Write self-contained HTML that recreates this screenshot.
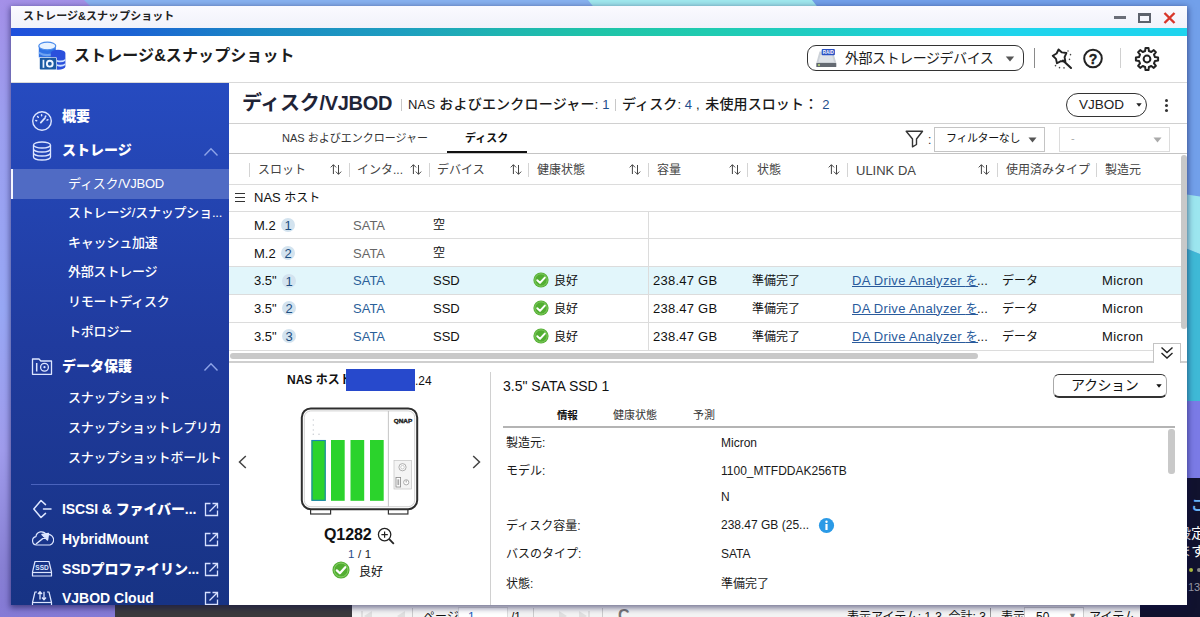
<!DOCTYPE html>
<html lang="ja">
<head>
<meta charset="utf-8">
<title>ストレージ&amp;スナップショット</title>
<style>
*{box-sizing:border-box;margin:0;padding:0}
html,body{width:1200px;height:617px;overflow:hidden}
body{position:relative;font-family:"Liberation Sans","Noto Sans CJK JP",sans-serif;font-size:12px;color:#1a1a1a;background:#98a8f5}
.abs{position:absolute}
.t{position:absolute;white-space:nowrap;line-height:1}
/* wallpaper */
#wall{position:absolute;left:0;top:0;width:1200px;height:617px}
/* window */
#win{position:absolute;left:11px;top:6px;width:1176px;height:599px;background:#fff;overflow:hidden;box-shadow:0 2px 6px 1px rgba(15,15,70,.55)}
#pc{position:absolute;left:-11px;top:-6px;width:1200px;height:617px}
#tbar{position:absolute;left:11px;top:6px;width:1176px;height:22px;background:linear-gradient(#fafaff,#f1f2fa)}
#grad{position:absolute;left:11px;top:28px;width:1176px;height:8px;background:linear-gradient(90deg,#2050dc 0%,#1b62d4 10%,#1a88c4 21%,#1e9ec0 33%,#1fb5b0 42%,#1fc4a8 50%,#20cbb0 59%,#20ccc0 67%,#1fd0d8 76%,#1fd4ec 85%,#1fd4ee 100%)}
#hdr{position:absolute;left:11px;top:36px;width:1176px;height:47px;background:#fff;border-bottom:1px solid #d9d9d9}
#side{position:absolute;left:11px;top:83px;width:218px;height:522px;background:linear-gradient(#264bc0 0%,#203b9e 50%,#173384 100%);color:#fff;overflow:hidden}
#main{position:absolute;left:229px;top:83px;width:958px;height:522px;background:#fff;overflow:hidden}
.sub{color:#fff;position:absolute;left:57px;font-size:13px;font-weight:500;white-space:nowrap;line-height:1;letter-spacing:-.2px}
.grp{color:#fff;position:absolute;left:51px;font-size:14px;font-weight:900;white-space:nowrap;line-height:1}
.hl{position:absolute;height:1px;background:#dcdcdc}
.vl{position:absolute;width:1px;background:#d4d4d4}
.th{position:absolute;top:86px;font-size:12px;color:#444;white-space:nowrap;line-height:1}
.td{position:absolute;font-size:13px;white-space:nowrap;line-height:1;color:#111}
.cj{font-size:12px}
.srt{position:absolute;top:163.500px;width:12px;height:11px}
.bdg{position:absolute;width:14px;height:14px;border-radius:7px;background:#d3e3ef;color:#1d4e80;font-size:13px;text-align:center;line-height:15px}
</style>
</head>
<body>
<svg id="wall" viewBox="0 0 1200 617">
  <defs>
    <linearGradient id="lw" x1="0" y1="0" x2="0" y2="1"><stop offset="0" stop-color="#a490e8"/><stop offset=".2" stop-color="#9c9ff0"/><stop offset=".5" stop-color="#98a8f5"/><stop offset=".73" stop-color="#a09cec"/><stop offset=".92" stop-color="#8880d4"/><stop offset="1" stop-color="#857ad6"/></linearGradient>
  </defs>
  <rect width="1200" height="617" fill="url(#lw)"/>
  <polygon points="84,0 590,0 598,10 94,10" fill="#88b2f0"/>
  <polygon points="588,0 815,0 822,10 596,10" fill="#a0e8ee"/>
  <polygon points="812,0 1200,0 1200,197 1180,194 1180,10 820,10" fill="#72a0ea"/>
  <polygon points="1180,193.500 1200,196.500 1200,254 1180,246" fill="#9ce6ef"/>
  <polygon points="1180,246 1200,254 1200,402 1180,402" fill="#3fb9d6"/>
  <rect x="1180" y="401" width="20" height="78" fill="#7b7be6"/>
  <rect x="1140" y="478" width="60" height="139" fill="#11122e"/>
  <rect x="115" y="600" width="240" height="17" fill="#3b3b3d"/>
</svg>
<div id="bgtxt">
  <div class="t" style="left:1191px;top:498px;font-size:14px;color:#6cb2f4;font-weight:700">こ</div>
  <div class="t" style="left:1177px;top:526px;font-size:14px;color:#fff">設定</div>
  <div class="t" style="left:1177px;top:544px;font-size:14px;color:#fff">ます</div>
  <div class="abs" style="left:1189px;top:568px;width:4px;height:4px;border-radius:2px;background:#b8c83c"></div>
  <div class="abs" style="left:1197px;top:568px;width:4px;height:4px;border-radius:2px;background:#888"></div>
  <div class="t" style="left:1188px;top:582px;font-size:11px;color:#9a9aa8">13</div>
</div>
<!-- paging bar of window behind -->
<div id="pbar" class="abs" style="left:352px;top:605px;width:788px;height:12px;background:#f4f4f4;overflow:hidden;font-size:12px;color:#111">
  <svg class="abs" style="left:8px;top:6px" width="240" height="10" viewBox="0 0 240 10" fill="#e0e0e0"><path d="M1 0 h2 v10 h-2 z M12 0 v10 l-8 -5 z M45 0 v10 l-8 -5 z M199 0 v10 l8 -5 z M219 0 v10 l8 -5 z M228 0 h2 v10 h-2 z"/></svg>
  <div class="vl" style="left:60px;top:3px;height:12px;background:#ccc"></div>
  <div class="t" style="left:71px;top:6px">ページ</div>
  <div class="abs" style="left:106px;top:2px;width:50px;height:14px;background:#fff;border:1px solid #ddd"></div>
  <div class="t" style="left:116px;top:6px;color:#2060c0">1</div>
  <div class="t" style="left:159px;top:6px">/1</div>
  <div class="vl" style="left:181px;top:3px;height:12px;background:#ccc"></div>
  <div class="vl" style="left:250px;top:3px;height:12px;background:#ccc"></div>
  <div class="t" style="left:266px;top:3px;font-size:16px;color:#777;font-weight:700">C</div>
  <div class="t" style="left:495px;top:6px">表示アイテム: 1-3, 合計: 3</div>
  <div class="vl" style="left:638px;top:3px;height:12px;background:#999"></div>
  <div class="t" style="left:649px;top:6px">表示</div>
  <div class="abs" style="left:672px;top:2px;width:60px;height:14px;background:#fff;border:1px solid #ccc"></div>
  <div class="t" style="left:684px;top:6px">50</div>
  <div class="t" style="left:716px;top:7px;font-size:9px;color:#666">▼</div>
  <div class="t" style="left:737px;top:6px">アイテム</div>
</div>

<div id="win"><div id="pc">
  <div id="tbar">
    <div class="t" style="left:12px;top:5px;font-size:11px;font-weight:700;color:#222;letter-spacing:.05px">ストレージ&amp;スナップショット</div>
    <div class="abs" style="left:1103px;top:10px;width:12px;height:3px;background:#6a6e78"></div>
    <div class="abs" style="left:1127px;top:7px;width:13px;height:10px;border:2px solid #5d626c;border-top-width:3px"></div>
    <svg class="abs" style="left:1152px;top:6px" width="13" height="12" viewBox="0 0 13 12"><path d="M1.5 1 L11.5 11 M11.5 1 L1.5 11" stroke="#d8362a" stroke-width="2.4" fill="none"/></svg>
  </div>
  <div id="grad"></div>
  <div id="hdr"></div>
  <div id="side"></div>
  <div id="main"></div>

<!-- sidebar -->
<div class="abs" style="left:11px;top:169px;width:218px;height:30px;background:#506bc4"></div>
<div class="abs" style="left:11px;top:169px;width:2px;height:30px;background:#f4f6ff"></div>
<svg class="abs" style="left:31px;top:110px" width="22" height="22" viewBox="0 0 22 22" fill="none" stroke="#dde6ff" stroke-width="1.400" stroke-linecap="round">
  <circle cx="11" cy="11" r="9.300"/>
  <path d="M9.800 12.600 L14 8" stroke-width="1.800"/>
  <path d="M4.800 10.500 l.9 .2 M6.600 6.600 l.7 .6 M10.600 4.800 v.9 M14.800 6 l-.5 .7 M16.900 9.800 l-.9 .3" stroke-width="1.500"/>
</svg>
<div class="grp" style="left:62px;top:109px">概要</div>
<svg class="abs" style="left:32px;top:141px" width="20" height="20" viewBox="0 0 20 20" fill="none" stroke="#dde6ff" stroke-width="1.300">
  <ellipse cx="10" cy="4" rx="8.500" ry="3"/>
  <path d="M1.500 4 V16 a8.500 3 0 0 0 17 0 V4"/>
  <path d="M1.500 8 a8.500 3 0 0 0 17 0 M1.500 12 a8.500 3 0 0 0 17 0"/>
</svg>
<div class="grp" style="left:62px;top:143px">ストレージ</div>
<svg class="abs" style="left:203px;top:147px" width="16" height="10" viewBox="0 0 16 10" fill="none" stroke="#8ea4e8" stroke-width="1.400"><path d="M1.500 8.500 L8 1.800 L14.500 8.500"/></svg>
<div class="sub" style="left:68px;top:177px;font-weight:400">ディスク/VJBOD</div>
<div class="sub" style="left:68px;top:206px">ストレージ/スナップショ...</div>
<div class="sub" style="left:68px;top:236px">キャッシュ加速</div>
<div class="sub" style="left:68px;top:265px">外部ストレージ</div>
<div class="sub" style="left:68px;top:295px">リモートディスク</div>
<div class="sub" style="left:68px;top:325px">トポロジー</div>
<svg class="abs" style="left:31px;top:357px" width="22" height="19" viewBox="0 0 22 19" fill="none" stroke="#dde6ff" stroke-width="1.300" stroke-linejoin="round">
  <path d="M1.500 17.300 V2 H8 L9.800 4 H20.500 V17.300 Z"/>
  <path d="M5.700 6 V14.500" stroke-width="1.500"/>
  <circle cx="13.500" cy="10.200" r="3.900"/>
  <circle cx="13.500" cy="10.200" r="1.100" fill="#dde6ff" stroke="none"/>
</svg>
<div class="grp" style="left:62px;top:359px">データ保護</div>
<svg class="abs" style="left:203px;top:362px" width="16" height="10" viewBox="0 0 16 10" fill="none" stroke="#8ea4e8" stroke-width="1.400"><path d="M1.500 8.500 L8 1.800 L14.500 8.500"/></svg>
<div class="sub" style="left:68px;top:391px">スナップショット</div>
<div class="sub" style="left:68px;top:421px">スナップショットレプリカ</div>
<div class="sub" style="left:68px;top:451px">スナップショットボールト</div>
<div class="abs" style="left:31px;top:484px;width:189px;height:1px;background:#4a63bd"></div>
<svg class="abs" style="left:32px;top:499px" width="21" height="20" viewBox="0 0 21 20" fill="none" stroke="#dde6ff" stroke-width="1.500" stroke-linejoin="round" stroke-linecap="round">
  <path d="M13.500 5.600 L9 1.500 L1.800 10 L9 18.500 L13.500 14.400"/>
  <path d="M11.500 10 H19"/>
</svg>
<div class="grp" style="left:62px;top:502px;letter-spacing:-.1px">ISCSI &amp; ファイバー...</div>
<svg class="abs" style="left:204px;top:502px" width="15" height="15" viewBox="0 0 15 15" fill="none" stroke="#d6e0ff" stroke-width="1.300"><path d="M6.500 1.500 H1.500 V13.500 H13.500 V8.500"/><path d="M5.500 9.500 L13 2 M8.500 1.500 H13.500 V6.500"/></svg>
<svg class="abs" style="left:31px;top:531px" width="23" height="16" viewBox="0 0 23 16" fill="none" stroke="#dde6ff" stroke-width="1.200" stroke-linejoin="round">
  <path d="M5.500 14 a4.200 4.200 0 0 1 -.6 -8.300 a5.500 5.500 0 0 1 10.300 -2 a4.800 4.800 0 0 1 3.800 10.300 z"/>
  <path d="M5 13 L15.500 4.500 M11 3.500 L17.500 2.500 L16.500 9 Z" fill="#dde6ff" stroke-width="1.500"/>
</svg>
<div class="grp" style="left:62px;top:532px">HybridMount</div>
<svg class="abs" style="left:204px;top:532px" width="15" height="15" viewBox="0 0 15 15" fill="none" stroke="#d6e0ff" stroke-width="1.300"><path d="M6.500 1.500 H1.500 V13.500 H13.500 V8.500"/><path d="M5.500 9.500 L13 2 M8.500 1.500 H13.500 V6.500"/></svg>
<svg class="abs" style="left:31px;top:560px" width="22" height="18" viewBox="0 0 22 18" fill="none" stroke="#dde6ff" stroke-width="1.200" stroke-linejoin="round">
  <path d="M4 1.500 H18 L20.500 12 V16 H1.500 V12 Z"/>
  <path d="M1.500 12.500 H20.500"/>
  <text x="11" y="10" font-size="6.500" font-weight="700" fill="#dde6ff" stroke="none" text-anchor="middle" font-family="Liberation Sans, sans-serif">SSD</text>
</svg>
<div class="grp" style="left:62px;top:562px;letter-spacing:-.1px">SSDプロファイリン...</div>
<svg class="abs" style="left:204px;top:562px" width="15" height="15" viewBox="0 0 15 15" fill="none" stroke="#d6e0ff" stroke-width="1.300"><path d="M6.500 1.500 H1.500 V13.500 H13.500 V8.500"/><path d="M5.500 9.500 L13 2 M8.500 1.500 H13.500 V6.500"/></svg>
<svg class="abs" style="left:31px;top:590px" width="22" height="18" viewBox="0 0 22 18" fill="none" stroke="#dde6ff" stroke-width="1.200" stroke-linejoin="round">
  <path d="M6 2 H4 L1.500 12.500 V17 H20.500 V12.500 L18 2 H16"/>
  <path d="M1.500 12.500 H20.500"/>
  <path d="M9 9.500 V2 M7 4 L9 1.800 L11 4 M13 1.800 V9.500 M11 7.500 L13 9.700 L15 7.500" stroke-width="1.300"/>
</svg>
<div class="grp" style="left:62px;top:591px">VJBOD Cloud</div>
<svg class="abs" style="left:204px;top:591px" width="15" height="15" viewBox="0 0 15 15" fill="none" stroke="#d6e0ff" stroke-width="1.300"><path d="M6.500 1.500 H1.500 V13.500 H13.500 V8.500"/><path d="M5.500 9.500 L13 2 M8.500 1.500 H13.500 V6.500"/></svg>
<!--SIDE-->

<!-- header -->
<svg class="abs" style="left:38px;top:41px" width="29" height="30" viewBox="38 41 29 30">
  <path d="M38.8 46 v11.5 h17 v-11.5 z" fill="#2f72e4"/>
  <path d="M38.8 51.5 q8.5 5 17 0 v2.2 q-8.500 5 -17 0 z" fill="#7fb0f4" opacity=".8"/>
  <ellipse cx="47.3" cy="46" rx="8.5" ry="3.8" fill="#e8f3ff" stroke="#4a8cec" stroke-width="1.2"/>
  <path d="M50.8 53 a7.300 3.200 0 0 1 14.600 0 v13.500 a7.300 3.200 0 0 1 -14.600 0 z" fill="#2b50dc"/>
  <path d="M57 60 q5 1.500 8.400 -1 v1.800 q-3.400 2.500 -8.400 1 z M57 64.300 q5 1.500 8.400 -1 v1.800 q-3.400 2.500 -8.400 1 z" fill="#cfe2ff"/>
  <rect x="39.200" y="57.200" width="17.600" height="12.800" rx="1" fill="#fff"/>
  <rect x="39.800" y="57.800" width="16.400" height="11.800" rx=".8" fill="#1b5aa2"/>
  <rect x="42.600" y="59.800" width="1.700" height="8" fill="#e8f2ff"/>
  <circle cx="49.800" cy="63.700" r="2.900" fill="#1b5aa2" stroke="#f2f7ff" stroke-width="1.900"/>
</svg>
<div class="t" style="left:74px;top:48px;font-size:16px;font-weight:700;color:#1c1c1c;letter-spacing:.1px">ストレージ&amp;スナップショット</div>
<div class="abs" style="left:806.500px;top:45px;width:217px;height:25.500px;border:1.300px solid #333;border-radius:9px;background:#fff"></div>
<svg class="abs" style="left:815px;top:48px" width="23" height="20" viewBox="815 48 23 20">
  <path d="M819.500 51.500 h13.500 l3.300 11.500 h-20 z" fill="#cdd2d8"/>
  <path d="M820.500 55 h11.500 l2 7 h-15.500 z" fill="#dfe3e8"/>
  <rect x="816.300" y="63" width="20" height="4" rx=".6" fill="#646a72"/>
  <rect x="821.700" y="49" width="13.200" height="6.300" rx="1" fill="#2a50c4"/>
  <circle cx="819" cy="65" r=".9" fill="#c9ef7a"/>
  <text x="828.300" y="54" font-size="4.800" font-weight="700" fill="#fff" text-anchor="middle" font-family="Liberation Sans, sans-serif" textLength="11" lengthAdjust="spacingAndGlyphs">RAID</text>
</svg>
<div class="t" style="left:845px;top:51px;font-size:14px;color:#1c1c1c;letter-spacing:-.45px">外部ストレージデバイス</div>
<svg class="abs" style="left:1005px;top:56px" width="10" height="6" viewBox="0 0 10 6"><path d="M.8 .6 h8.400 l-4.200 4.800 z" fill="#555"/></svg>
<div class="abs" style="left:1034px;top:48px;width:1px;height:20px;background:#8a8a8a"></div>
<!-- wand -->
<svg class="abs" style="left:1050px;top:47px" width="24" height="24" viewBox="0 0 24 24" fill="none" stroke="#222" stroke-width="1.900" stroke-linejoin="round" stroke-linecap="round">
  <path d="M8.55 2.45 L11.91 5.42 L16.36 6.01 L14.57 10.12 L15.38 14.54 L10.91 14.11 L6.97 16.24 L5.99 11.86 L2.75 8.77 L6.61 6.49 Z"/>
  <path d="M13 13.500 l8 7.500" stroke-width="2.100"/>
  <path d="M18 4 v.1 M20.500 7.600 v.1 M19.500 12.300 v.1 M5.500 18.600 v.1 M9.500 20.600 v.1 M14 20.800 v.1" stroke-width="1.500" stroke="#444"/>
</svg>
<!-- help -->
<svg class="abs" style="left:1082px;top:48px" width="22" height="22" viewBox="0 0 22 22">
  <circle cx="11" cy="10.500" r="8.800" fill="#fff" stroke="#222" stroke-width="2"/>
  <text x="11" y="15.500" font-size="14" font-weight="700" fill="#222" stroke="#222" stroke-width=".4" text-anchor="middle" font-family="Liberation Sans, sans-serif">?</text>
</svg>
<div class="abs" style="left:1120px;top:48px;width:1px;height:20px;background:#d0d0d0"></div>
<!-- gear -->
<svg class="abs" style="left:1134px;top:46px" width="26" height="26" viewBox="-13 -13 26 26" fill="none" stroke="#222" stroke-width="2" stroke-linejoin="round">
  <path d="M7.97 -1.91 L11.10 -1.49 L11.10 1.49 L7.97 1.91 L6.99 4.28 L8.90 6.79 L6.79 8.90 L4.28 6.99 L1.91 7.97 L1.49 11.10 L-1.49 11.10 L-1.91 7.97 L-4.28 6.99 L-6.79 8.90 L-8.90 6.79 L-6.99 4.28 L-7.97 1.91 L-11.10 1.49 L-11.10 -1.49 L-7.97 -1.91 L-6.99 -4.28 L-8.90 -6.79 L-6.79 -8.90 L-4.28 -6.99 L-1.91 -7.97 L-1.49 -11.10 L1.49 -11.10 L1.91 -7.97 L4.28 -6.99 L6.79 -8.90 L8.90 -6.79 L6.99 -4.28 Z"/>
  <circle r="3.400"/>
</svg>
<!--HDR-->

<!-- main heading -->
<div class="t" style="left:242px;top:93px;font-size:20px;font-weight:700;color:#1f2437;letter-spacing:-.3px">ディスク/VJBOD</div>
<div class="abs" style="left:401px;top:99px;width:1px;height:12px;background:#c8c8c8"></div>
<div class="t" style="left:408px;top:97px;font-size:14px;color:#1a1a1a;font-weight:500;letter-spacing:.22px"><span style="font-size:13px">NAS </span>およびエンクロージャー<span style="font-size:13px;font-weight:400">: <span style="color:#1f4e8c">1</span></span></div>
<div class="abs" style="left:615px;top:99px;width:1px;height:12px;background:#c8c8c8"></div>
<div class="t" style="left:622px;top:97px;font-size:14px;color:#1a1a1a;font-weight:500;letter-spacing:.1px">ディスク<span style="font-size:13px;font-weight:400">: <span style="color:#1f4e8c">4</span> ,&nbsp;</span><span style="margin-left:2px">未使用スロット：</span> <span style="font-size:13px;color:#1f4e8c">2</span></div>
<div class="abs" style="left:1066px;top:93px;width:81px;height:24px;border:1px solid #333;border-radius:12px"></div>
<div class="t" style="left:1079px;top:98px;font-size:13.500px;color:#222">VJBOD</div>
<svg class="abs" style="left:1136px;top:103px" width="6" height="4" viewBox="0 0 6 4"><path d="M.3 .3 h5.400 l-2.700 3.500 z" fill="#222"/></svg>
<div class="abs" style="left:1165px;top:99px;width:3px;height:3px;border-radius:2px;background:#333;box-shadow:0 5px 0 #333,0 10px 0 #333"></div>
<div class="hl" style="left:229px;top:123px;width:958px;background:#d0d0d0"></div>
<!-- tabs -->
<div class="t" style="left:282px;top:133px;font-size:11px;color:#333">NAS およびエンクロージャー</div>
<div class="t" style="left:465px;top:133px;font-size:11px;font-weight:700;color:#111">ディスク</div>
<div class="abs" style="left:447px;top:151px;width:80px;height:2px;background:#111"></div>
<svg class="abs" style="left:905px;top:130px" width="19" height="18" viewBox="0 0 19 18" fill="none" stroke="#333" stroke-width="1.400" stroke-linejoin="round"><path d="M1.200 1.200 H17.500 L11.500 9 V14.500 L7.500 16.800 V9 Z"/></svg>
<div class="t" style="left:928px;top:134px;font-size:12px;color:#333">:</div>
<div class="abs" style="left:934px;top:127px;width:111px;height:25px;border:1px solid #c4c4c4;background:#fff"></div>
<div class="t" style="left:946px;top:133px;font-size:11px;color:#111;letter-spacing:-.4px">フィルターなし</div>
<svg class="abs" style="left:1028px;top:137px" width="9" height="6" viewBox="0 0 9 6"><path d="M.5 .5 h8 l-4 5 z" fill="#555"/></svg>
<div class="abs" style="left:1059px;top:127px;width:111px;height:25px;border:1px solid #dcdcdc;background:#fff"></div>
<div class="t" style="left:1071px;top:133px;font-size:11px;color:#aaa">-</div>
<svg class="abs" style="left:1153px;top:137px" width="9" height="6" viewBox="0 0 9 6"><path d="M.5 .5 h8 l-4 5 z" fill="#aaa"/></svg>
<div class="hl" style="left:229px;top:153px;width:958px;background:#c4c4c4"></div>
<!-- table header -->
<div class="vl" style="left:249px;top:163px;height:14px"></div>
<div class="th" style="left:258px;top:164px">スロット</div><svg class="srt" style="left:330px" viewBox="0 0 12 11" fill="none" stroke="#444" stroke-width="1"><path d="M3.400 10 V.8 M.7 3.400 L3.400 .7 L6.100 3.400 M8.500 1 V10.300 M5.800 7.600 L8.500 10.300 L11.200 7.600"/></svg>
<div class="vl" style="left:349px;top:163px;height:14px"></div>
<div class="th" style="left:357px;top:164px">インタ...</div><svg class="srt" style="left:410px" viewBox="0 0 12 11" fill="none" stroke="#444" stroke-width="1"><path d="M3.400 10 V.8 M.7 3.400 L3.400 .7 L6.100 3.400 M8.500 1 V10.300 M5.800 7.600 L8.500 10.300 L11.200 7.600"/></svg>
<div class="vl" style="left:429px;top:163px;height:14px"></div>
<div class="th" style="left:437px;top:164px">デバイス</div><svg class="srt" style="left:510px" viewBox="0 0 12 11" fill="none" stroke="#444" stroke-width="1"><path d="M3.400 10 V.8 M.7 3.400 L3.400 .7 L6.100 3.400 M8.500 1 V10.300 M5.800 7.600 L8.500 10.300 L11.200 7.600"/></svg>
<div class="vl" style="left:528px;top:163px;height:14px"></div>
<div class="th" style="left:537px;top:164px">健康状態</div><svg class="srt" style="left:629px" viewBox="0 0 12 11" fill="none" stroke="#444" stroke-width="1"><path d="M3.400 10 V.8 M.7 3.400 L3.400 .7 L6.100 3.400 M8.500 1 V10.300 M5.800 7.600 L8.500 10.300 L11.200 7.600"/></svg>
<div class="vl" style="left:648px;top:163px;height:14px"></div>
<div class="th" style="left:657px;top:164px">容量</div><svg class="srt" style="left:729px" viewBox="0 0 12 11" fill="none" stroke="#444" stroke-width="1"><path d="M3.400 10 V.8 M.7 3.400 L3.400 .7 L6.100 3.400 M8.500 1 V10.300 M5.800 7.600 L8.500 10.300 L11.200 7.600"/></svg>
<div class="vl" style="left:747px;top:163px;height:14px"></div>
<div class="th" style="left:757px;top:164px">状態</div><svg class="srt" style="left:828px" viewBox="0 0 12 11" fill="none" stroke="#444" stroke-width="1"><path d="M3.400 10 V.8 M.7 3.400 L3.400 .7 L6.100 3.400 M8.500 1 V10.300 M5.800 7.600 L8.500 10.300 L11.200 7.600"/></svg>
<div class="vl" style="left:847px;top:163px;height:14px"></div>
<div class="th" style="left:856px;top:164px;font-size:13px">ULINK DA</div><svg class="srt" style="left:978px" viewBox="0 0 12 11" fill="none" stroke="#444" stroke-width="1"><path d="M3.400 10 V.8 M.7 3.400 L3.400 .7 L6.100 3.400 M8.500 1 V10.300 M5.800 7.600 L8.500 10.300 L11.200 7.600"/></svg>
<div class="vl" style="left:997px;top:163px;height:14px"></div>
<div class="th" style="left:1006px;top:164px">使用済みタイプ</div>
<div class="vl" style="left:1096px;top:163px;height:14px"></div>
<div class="th" style="left:1105px;top:164px">製造元</div>
<div class="hl" style="left:229px;top:184px;width:952px"></div>

<div class="abs" style="left:229px;top:267px;width:952px;height:27px;background:#e2f6fb"></div>
<div class="hl" style="left:229px;top:211px;width:952px"></div>
<div class="hl" style="left:229px;top:238px;width:952px"></div>
<div class="hl" style="left:229px;top:266px;width:952px"></div>
<div class="hl" style="left:229px;top:294px;width:952px"></div>
<div class="hl" style="left:229px;top:322px;width:952px"></div>
<div class="hl" style="left:229px;top:350px;width:952px"></div>
<div class="vl" style="left:648px;top:211px;height:139px;background:#dcdcdc"></div>
<div class="abs" style="left:235px;top:193px;width:10px;height:1px;background:#333;box-shadow:0 4px 0 #333,0 8px 0 #333"></div>
<div class="td" style="left:254px;top:191px"><span>NAS </span><span class="cj">ホスト</span></div>
<div class="td" style="left:254px;top:218.5px">M.2</div>
<div class="bdg" style="left:281px;top:218px">1</div>
<div class="td" style="left:353px;top:218.5px;color:#666">SATA</div>
<div class="td cj" style="left:433px;top:219px">空</div>
<div class="td" style="left:254px;top:246.5px">M.2</div>
<div class="bdg" style="left:281px;top:246px">2</div>
<div class="td" style="left:353px;top:246.5px;color:#666">SATA</div>
<div class="td cj" style="left:433px;top:247px">空</div>
<div class="td" style="left:254px;top:274px">3.5&quot;</div>
<div class="bdg" style="left:282px;top:273.5px">1</div>
<div class="td" style="left:353px;top:274px;color:#2a6099">SATA</div>
<div class="td" style="left:433px;top:274px">SSD</div>
<svg class="abs" style="left:533px;top:272px" width="16" height="16" viewBox="0 0 16 16"><circle cx="8" cy="8" r="7.600" fill="#52ae32"/><circle cx="8" cy="8" r="6.200" fill="none" stroke="#8fd26e" stroke-width=".8"/><path d="M4.300 8.300 L7 10.900 L11.800 5.600" fill="none" stroke="#fff" stroke-width="2" stroke-linecap="round" stroke-linejoin="round"/></svg>
<div class="td cj" style="left:554px;top:274.5px">良好</div>
<div class="td" style="left:653px;top:274px;letter-spacing:.25px">238.47 GB</div>
<div class="td cj" style="left:752px;top:274.5px">準備完了</div>
<div class="td" style="left:852px;top:274px;color:#2a5b9c;text-decoration:underline;letter-spacing:.3px">DA Drive Analyzer <span class="cj">を</span></div>
<div class="td" style="left:977px;top:274px;color:#222">...</div>
<div class="td cj" style="left:1002px;top:274.5px">データ</div>
<div class="td" style="left:1102px;top:274px;letter-spacing:.4px">Micron</div>
<div class="td" style="left:254px;top:301.5px">3.5&quot;</div>
<div class="bdg" style="left:282px;top:301px">2</div>
<div class="td" style="left:353px;top:301.5px;color:#2a6099">SATA</div>
<div class="td" style="left:433px;top:301.5px">SSD</div>
<svg class="abs" style="left:533px;top:300px" width="16" height="16" viewBox="0 0 16 16"><circle cx="8" cy="8" r="7.600" fill="#52ae32"/><circle cx="8" cy="8" r="6.200" fill="none" stroke="#8fd26e" stroke-width=".8"/><path d="M4.300 8.300 L7 10.900 L11.800 5.600" fill="none" stroke="#fff" stroke-width="2" stroke-linecap="round" stroke-linejoin="round"/></svg>
<div class="td cj" style="left:554px;top:303px">良好</div>
<div class="td" style="left:653px;top:301.5px;letter-spacing:.25px">238.47 GB</div>
<div class="td cj" style="left:752px;top:303px">準備完了</div>
<div class="td" style="left:852px;top:301.5px;color:#2a5b9c;text-decoration:underline;letter-spacing:.3px">DA Drive Analyzer <span class="cj">を</span></div>
<div class="td" style="left:977px;top:301.5px;color:#222">...</div>
<div class="td cj" style="left:1002px;top:303px">データ</div>
<div class="td" style="left:1102px;top:301.5px;letter-spacing:.4px">Micron</div>
<div class="td" style="left:254px;top:329.5px">3.5&quot;</div>
<div class="bdg" style="left:282px;top:329px">3</div>
<div class="td" style="left:353px;top:329.5px;color:#2a6099">SATA</div>
<div class="td" style="left:433px;top:329.5px">SSD</div>
<svg class="abs" style="left:533px;top:328px" width="16" height="16" viewBox="0 0 16 16"><circle cx="8" cy="8" r="7.600" fill="#52ae32"/><circle cx="8" cy="8" r="6.200" fill="none" stroke="#8fd26e" stroke-width=".8"/><path d="M4.300 8.300 L7 10.900 L11.800 5.600" fill="none" stroke="#fff" stroke-width="2" stroke-linecap="round" stroke-linejoin="round"/></svg>
<div class="td cj" style="left:554px;top:331px">良好</div>
<div class="td" style="left:653px;top:329.5px;letter-spacing:.25px">238.47 GB</div>
<div class="td cj" style="left:752px;top:331px">準備完了</div>
<div class="td" style="left:852px;top:329.5px;color:#2a5b9c;text-decoration:underline;letter-spacing:.3px">DA Drive Analyzer <span class="cj">を</span></div>
<div class="td" style="left:977px;top:329.5px;color:#222">...</div>
<div class="td cj" style="left:1002px;top:331px">データ</div>
<div class="td" style="left:1102px;top:329.5px;letter-spacing:.4px">Micron</div>

<div class="abs" style="left:230px;top:353px;width:748px;height:6px;border-radius:3px;background:#c9c9c9"></div>
<div class="abs" style="left:1181px;top:155px;width:6px;height:174px;border-radius:3px;background:#c9c9c9"></div>
<div class="abs" style="left:229px;top:361px;width:958px;height:2px;background:#cfcfcf"></div>
<div class="abs" style="left:1153px;top:343px;width:28px;height:20px;border:1px solid #c4c4c4;border-bottom:none;background:#fff"></div>
<svg class="abs" style="left:1160px;top:346px" width="14" height="14" viewBox="0 0 14 14" fill="none" stroke="#222" stroke-width="1.400"><path d="M1.500 1.500 L7 6.500 L12.500 1.500 M1.500 7 L7 12 L12.500 7"/></svg>

<!-- bottom panel left -->
<div class="t" style="left:287px;top:374px;font-size:12px;font-weight:700;color:#111">NAS ホスト</div>
<div class="abs" style="left:346px;top:369px;width:69px;height:22px;background:#2749cc"></div>
<div class="t" style="left:415px;top:375px;font-size:12px;color:#111">.24</div>
<svg class="abs" style="left:238px;top:455px" width="9" height="14" viewBox="0 0 9 14" fill="none" stroke="#444" stroke-width="1.500"><path d="M7.800 1 L1.500 7 L7.800 13"/></svg>
<svg class="abs" style="left:472px;top:455px" width="9" height="14" viewBox="0 0 9 14" fill="none" stroke="#444" stroke-width="1.500"><path d="M1.200 1 L7.500 7 L1.200 13"/></svg>
<svg class="abs" style="left:298px;top:405px" width="124" height="112" viewBox="298 405 124 112">
  <rect x="310.600" y="508" width="20" height="6" fill="#fff" stroke="#333" stroke-width="1.200"/>
  <rect x="388.400" y="508" width="19.500" height="6" fill="#fff" stroke="#333" stroke-width="1.200"/>
  <rect x="301.800" y="408.400" width="115.400" height="100.800" rx="9" fill="#fff" stroke="#2e2e2e" stroke-width="2"/>
  <rect x="304.300" y="410.900" width="110.400" height="95.800" rx="6.500" fill="none" stroke="#bdbdbd" stroke-width=".7"/>
  <path d="M388.400 411 V506.500" stroke="#b8b8b8" stroke-width=".8"/>
  <g fill="#c9cdd2"><circle cx="313.300" cy="420" r=".7"/><circle cx="313.300" cy="425" r=".7"/><circle cx="313.300" cy="430" r=".7"/><circle cx="313.300" cy="434.200" r=".8"/><circle cx="319" cy="434.200" r=".8"/></g>
  <rect x="311.500" y="440" width="14.200" height="60.800" fill="#2bd32c"/>
  <rect x="312" y="440.500" width="13.200" height="59.800" fill="none" stroke="#1c84b4" stroke-width="1.100"/>
  <rect x="331" y="440" width="13.700" height="60.800" fill="#2bd32c"/>
  <rect x="350.500" y="440" width="13.700" height="60.800" fill="#2bd32c"/>
  <rect x="370" y="440" width="13.700" height="60.800" fill="#2bd32c"/>
  <text x="403" y="423.200" font-size="5.800" font-weight="700" fill="#222" stroke="#222" stroke-width=".35" text-anchor="middle" font-family="Liberation Sans, sans-serif" textLength="18.500" lengthAdjust="spacingAndGlyphs">QNAP</text>
  <rect x="394" y="460.500" width="17.400" height="28.500" fill="#f4f4f4" stroke="#c4c4c4" stroke-width=".7"/>
  <circle cx="402.500" cy="467.200" r="3.600" fill="#fff" stroke="#999" stroke-width=".8"/>
  <circle cx="402.500" cy="467.200" r="1.800" fill="none" stroke="#aaa" stroke-width=".6"/>
  <rect x="396" y="477.500" width="4.600" height="9.500" fill="#fff" stroke="#888" stroke-width=".8"/>
  <rect x="397.400" y="479.300" width="1.800" height="5.800" fill="#aaa"/>
  <circle cx="406.200" cy="482.300" r="2.600" fill="#fff" stroke="#999" stroke-width=".8"/>
  <path d="M406.200 480.300 V482.500" stroke="#888" stroke-width=".8"/>
</svg>
<div class="t" style="left:324px;top:527px;font-size:16px;font-weight:700;color:#111;letter-spacing:-.1px">Q1282</div>
<svg class="abs" style="left:377px;top:527px" width="18" height="18" viewBox="0 0 18 18" fill="none" stroke="#222" stroke-width="1.300"><circle cx="7.600" cy="7.600" r="6.200"/><path d="M12.200 12.200 L16.800 16.800" stroke-width="1.800"/><path d="M4.400 7.600 H10.800 M7.600 4.400 V10.800" stroke-width="1.200"/></svg>
<div class="t" style="left:348px;top:549px;font-size:11.500px;color:#222;letter-spacing:.2px"><span style="color:#1f4e8c">1</span> / 1</div>
<svg class="abs" style="left:332px;top:561px" width="18" height="18" viewBox="0 0 16 16"><circle cx="8" cy="8" r="7.600" fill="#52ae32"/><circle cx="8" cy="8" r="6.200" fill="none" stroke="#8fd26e" stroke-width=".8"/><path d="M4.300 8.300 L7 10.900 L11.800 5.600" fill="none" stroke="#fff" stroke-width="2" stroke-linecap="round" stroke-linejoin="round"/></svg>
<div class="t" style="left:359px;top:566px;font-size:12px;color:#111">良好</div>
<div class="vl" style="left:490px;top:372px;height:233px;background:#d0d0d0"></div>
<!-- bottom panel right -->
<div class="t" style="left:503px;top:379px;font-size:14px;color:#111">3.5&quot; SATA SSD 1</div>
<div class="abs" style="left:1053px;top:374px;width:114px;height:24px;border:1px solid #333;border-left-color:#aaa;border-right-color:#aaa;border-bottom-width:2px;border-radius:6px;background:#fff"></div>
<div class="t" style="left:1071px;top:378px;font-size:14px;color:#111;letter-spacing:-.4px">アクション</div>
<svg class="abs" style="left:1156px;top:384px" width="6" height="4" viewBox="0 0 6 4"><path d="M.3 .3 h5.400 l-2.700 3.400 z" fill="#111"/></svg>
<div class="t" style="left:557px;top:410px;font-size:10.500px;font-weight:700;color:#111;letter-spacing:-.3px">情報</div>
<div class="t" style="left:613px;top:410px;font-size:11px;color:#333">健康状態</div>
<div class="t" style="left:693px;top:410px;font-size:11px;color:#333">予測</div>
<div class="abs" style="left:503px;top:426px;width:672px;height:2px;background:#b4b4b4"></div>
<div class="t" style="left:506px;top:437px;font-size:12px">製造元:</div>
<div class="t" style="left:721px;top:437px;font-size:12px">Micron</div>
<div class="t" style="left:506px;top:465px;font-size:12px">モデル:</div>
<div class="t" style="left:721px;top:465px;font-size:12px">1100_MTFDDAK256TB</div>
<div class="t" style="left:721px;top:491px;font-size:12px">N</div>
<div class="t" style="left:506px;top:520px;font-size:12px">ディスク容量:</div>
<div class="t" style="left:721px;top:519px;font-size:12px">238.47 GB (25...</div>
<svg class="abs" style="left:818px;top:517px" width="17" height="17" viewBox="0 0 17 17"><circle cx="8.500" cy="8.500" r="7.600" fill="#2b9ae6"/><circle cx="8.500" cy="4.800" r="1.200" fill="#fff"/><rect x="7.400" y="7" width="2.200" height="6" rx=".5" fill="#fff"/></svg>
<div class="t" style="left:506px;top:548px;font-size:12px">バスのタイプ:</div>
<div class="t" style="left:721px;top:548px;font-size:12px">SATA</div>
<div class="t" style="left:506px;top:578px;font-size:12px">状態:</div>
<div class="t" style="left:721px;top:578px;font-size:12px">準備完了</div>
<div class="abs" style="left:1168px;top:429px;width:7px;height:45px;border-radius:3px;background:#c9c9c9"></div>


<!--MAIN-->
</div></div>
</body>
</html>
